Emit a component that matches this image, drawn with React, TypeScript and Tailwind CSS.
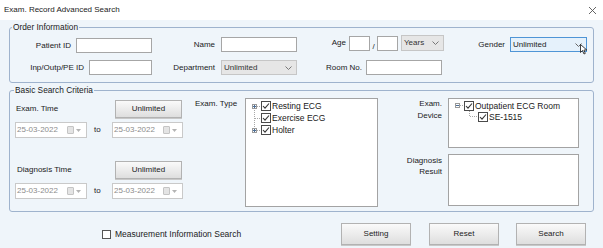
import React from "react";

const Input = ({ className = "" }: { className?: string }) => (
  <div className={`h-[15px] bg-white border border-[#a6a6a6] ${className}`} />
);

const Chevron = ({ color = "#777" }: { color?: string }) => (
  <svg width="7" height="4" viewBox="0 0 7 4" className="shrink-0">
    <path d="M0.5 0.5 L3.5 3.5 L6.5 0.5" fill="none" stroke={color} strokeWidth="1" />
  </svg>
);

const Select = ({ className = "", text }: { className?: string; text: string }) => (
  <div
    className={`h-[15px] flex items-center justify-between bg-[#e6e6e6] border border-[#c6c6c6] pl-[2px] pr-[4px] text-[#333] ${className}`}
  >
    <span>{text}</span>
    <Chevron />
  </div>
);

const Btn = ({ className = "", text }: { className?: string; text: string }) => (
  <div
    className={`flex items-center justify-center border border-[#b2b2b2] bg-linear-to-b from-[#fafafa] to-[#dedede] text-[#222] shadow-[0_1px_0_#c8c8c8] ${className}`}
  >
    {text}
  </div>
);

const DateBox = ({ className = "" }: { className?: string }) => (
  <div className={`h-[16px] flex items-center bg-white border border-[#c9c9c9] pl-[1px] text-[#8c8c8c] ${className}`}>
    <span>25-03-2022</span>
    <div className="ml-auto w-[7px] h-[8px] rounded-[1px] bg-[#e4e4e4] border border-[#c4c4c4]" />
    <svg width="5" height="3" viewBox="0 0 5 3" className="ml-[2px] mr-[5px]">
      <path d="M0 0 L5 0 L2.5 3 Z" fill="#b4b4b4" />
    </svg>
  </div>
);

const Check = () => (
  <svg width="10" height="10" viewBox="0 0 10 10" className="shrink-0">
    <rect x="0.5" y="0.5" width="9" height="9" fill="#fff" stroke="#4a4a4a" />
    <path d="M2 5 L4 7.2 L8 2.5" fill="none" stroke="#333" strokeWidth="1.1" />
  </svg>
);

type Kind = "first" | "mid" | "last";

const Expander = ({ kind, sign }: { kind: Kind; sign?: "plus" | "minus" }) => (
  <svg width="9" height="12" viewBox="0 0 9 12" className="shrink-0">
    {kind === "first" && <line x1="2.5" y1="8" x2="2.5" y2="12" stroke="#a8a8a8" strokeDasharray="1 1" />}
    {kind === "mid" && <line x1="2.5" y1="0" x2="2.5" y2="12" stroke="#a8a8a8" strokeDasharray="1 1" />}
    {kind === "last" && <line x1="2.5" y1="0" x2="2.5" y2="4" stroke="#a8a8a8" strokeDasharray="1 1" />}
    {kind === "mid" ? (
      <line x1="3" y1="6.5" x2="9" y2="6.5" stroke="#a8a8a8" strokeDasharray="1 1" />
    ) : (
      <line x1="5" y1="6.5" x2="9" y2="6.5" stroke="#a8a8a8" strokeDasharray="1 1" />
    )}
    {sign && (
      <>
        <rect x="0.5" y="4.5" width="4" height="4" fill="#fff" stroke="#9a9a9a" />
        <line x1="1" y1="6.5" x2="4" y2="6.5" stroke="#4b6e96" />
        {sign === "plus" && <line x1="2.5" y1="5" x2="2.5" y2="8" stroke="#4b6e96" />}
      </>
    )}
  </svg>
);

const Tree = ({ children, className = "" }: { children?: React.ReactNode; className?: string }) => (
  <div className={`bg-white border border-[#a3a3a3] text-[8.5px] ${className}`}>{children}</div>
);

export default function App() {
  return (
    <div className="w-[603px] h-[248px] overflow-hidden bg-[#eff5fa] font-['Liberation_Sans',Arial,sans-serif] text-[8px] leading-[10px] text-[#1a1a1a]">
      {/* Title bar */}
      <div className="h-[20px] bg-white flex items-center justify-between pl-[4px] pr-[7px]">
        <span className="text-[#222]">Exam. Record Advanced Search</span>
        <svg width="7" height="7" viewBox="0 0 7 7">
          <path d="M0 0 L7 7 M7 0 L0 7" stroke="#555" strokeWidth="0.9" />
        </svg>
      </div>

      <div className="px-[9px] pt-[2px]">
        {/* Order Information */}
        <fieldset className="border border-[#9fb3cd] rounded-[3px] pb-[7px]">
          <legend className="ml-[2px] px-[1px] leading-[10px] text-[8.3px]">Order Information</legend>
          <div className="flex items-start h-[18px] mt-[3px]">
            <div className="flex items-center mt-[3px]">
              <span className="w-[61px] text-right">Patient ID</span>
              <Input className="ml-[5px] w-[76px]" />
            </div>
            <div className="flex items-center mt-[2px]">
              <span className="w-[63px] text-right">Name</span>
              <Input className="ml-[6px] w-[76px]" />
            </div>
            <div className="flex items-center">
              <span className="w-[49px] text-right">Age</span>
              <Input className="ml-[3px] w-[21px]" />
              <span className="w-[7px] h-[15px] flex items-end justify-center leading-[9px]">/</span>
              <Input className="w-[21px]" />
              <Select className="ml-[3px] w-[43px] h-[16px]" text="Years" />
            </div>
            <div className="flex items-center mt-[2px]">
              <span className="w-[61px] text-right">Gender</span>
              <div className="relative ml-[5px] w-[77px] h-[15px] flex items-center justify-between bg-[#e5f1fb] border border-[#4f95d6] pl-[2px] pr-[4px] text-[#222]">
                <span>Unlimited</span>
                <Chevron color="#666" />
                <svg width="8" height="11" viewBox="0 0 8 11" className="absolute left-[69px] top-[6px]">
                  <path d="M0.5 0.5 L0.5 8.5 L2.5 6.5 L4 10 L5.3 9.4 L3.9 6 L6.8 6 Z" fill="#fff" stroke="#111" strokeWidth="0.8" />
                </svg>
              </div>
            </div>
          </div>
          <div className="flex items-center h-[15px] mt-[7px]">
            <span className="w-[74px] text-right">Inp/Outp/PE ID</span>
            <Input className="ml-[5px] w-[63px]" />
            <span className="w-[63px] text-right">Department</span>
            <Select className="ml-[6px] w-[76px]" text="Unlimited" />
            <span className="w-[65px] text-right">Room No.</span>
            <Input className="ml-[4px] w-[76px]" />
          </div>
        </fieldset>

        {/* Basic Search Criteria */}
        <fieldset className="mt-[2px] border border-[#9fb3cd] rounded-[3px] pb-[4px]">
          <legend className="ml-[4px] px-[1px] leading-[10px] text-[8.3px]">Basic Search Criteria</legend>
          <div className="flex items-start">
            <div className="ml-[5px] w-[168px] flex flex-col">
              <div className="mt-[5px] h-[18px] flex items-center">
                <span className="ml-[1px]">Exam. Time</span>
                <Btn className="ml-auto mr-[1px] w-[67px] h-[18px]" text="Unlimited" />
              </div>
              <div className="mt-[4px] h-[16px] flex items-center">
                <DateBox className="w-[72px]" />
                <span className="ml-[7px]">to</span>
                <DateBox className="ml-auto w-[71px]" />
              </div>
              <div className="mt-[23px] h-[18px] flex items-center">
                <span className="ml-[2px]">Diagnosis Time</span>
                <Btn className="ml-auto mr-[1px] w-[67px] h-[18px]" text="Unlimited" />
              </div>
              <div className="mt-[4px] h-[16px] flex items-center">
                <DateBox className="w-[72px]" />
                <span className="ml-[7px]">to</span>
                <DateBox className="ml-auto w-[71px]" />
              </div>
            </div>

            <span className="ml-[12px] w-[50px] mt-[4px]">Exam. Type</span>
            <Tree className="mt-[3px] w-[133px] h-[109px] pt-[1px] pl-[6px]">
              <div className="flex items-center h-[12px]">
                <Expander kind="first" sign="plus" />
                <Check />
                <span className="ml-[1px]">Resting ECG</span>
              </div>
              <div className="flex items-center h-[12px]">
                <Expander kind="mid" />
                <Check />
                <span className="ml-[1px]">Exercise ECG</span>
              </div>
              <div className="flex items-center h-[12px]">
                <Expander kind="last" sign="plus" />
                <Check />
                <span className="ml-[1px]">Holter</span>
              </div>
            </Tree>

            <div className="mt-[3px] flex flex-col gap-[6px]">
              <div className="flex items-start">
                <div className="w-[64px] text-right leading-[12px]">
                  Exam.
                  <br />
                  Device
                </div>
                <Tree className="ml-[6px] w-[131px] h-[50px] pt-[1px] pl-[6px]">
                  <div className="flex items-center h-[11px]">
                    <svg width="9" height="11" viewBox="0 0 9 11" className="shrink-0">
                      <rect x="0.5" y="3.5" width="4" height="4" fill="#fff" stroke="#9a9a9a" />
                      <line x1="1" y1="5.5" x2="4" y2="5.5" stroke="#4b6e96" />
                      <line x1="5" y1="5.5" x2="9" y2="5.5" stroke="#a8a8a8" strokeDasharray="1 1" />
                    </svg>
                    <Check />
                    <span className="ml-[1px]">Outpatient ECG Room</span>
                  </div>
                  <div className="flex items-center h-[11px] ml-[9px]">
                    <svg width="14" height="11" viewBox="0 0 14 11" className="shrink-0">
                      <path d="M5.5 0 L5.5 5.5 L14 5.5" fill="none" stroke="#a8a8a8" strokeDasharray="1 1" />
                    </svg>
                    <Check />
                    <span className="ml-[1px]">SE-1515</span>
                  </div>
                </Tree>
              </div>
              <div className="flex items-start">
                <div className="w-[64px] text-right leading-[11px] mt-[1px]">
                  Diagnosis
                  <br />
                  Result
                </div>
                <Tree className="ml-[6px] w-[131px] h-[52px]" />
              </div>
            </div>
          </div>
        </fieldset>

        {/* Bottom bar */}
        <div className="flex items-center mt-[11px] h-[22px]">
          <div className="ml-[93px] w-[9px] h-[9px] border border-[#555] bg-white" />
          <span className="ml-[4px] text-[8.5px]">Measurement Information Search</span>
          <div className="ml-auto mr-[8px] flex gap-[17px]">
            <Btn className="w-[70px] h-[22px] mr-[1px]" text="Setting" />
            <Btn className="w-[70px] h-[22px]" text="Reset" />
            <Btn className="w-[70px] h-[22px]" text="Search" />
          </div>
        </div>
      </div>
    </div>
  );
}
